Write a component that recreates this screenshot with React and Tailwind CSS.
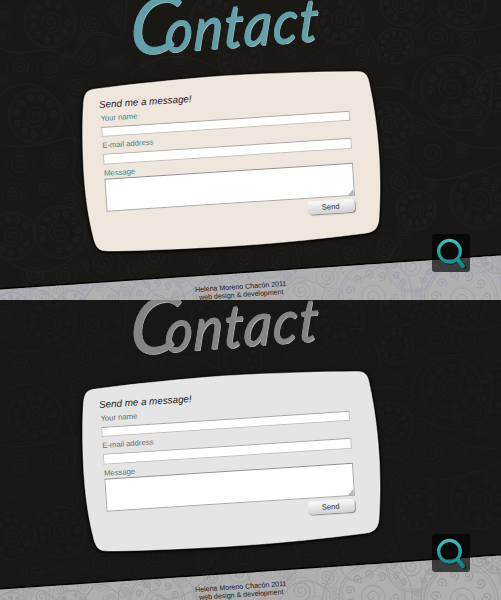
import React from "react";

const SANS = "font-['Liberation_Sans',Arial,sans-serif]";

function spiral(cx, cy, r, turns = 2.1, start = 0) {
  const steps = Math.round(turns * 12);
  let d = "";
  for (let i = 0; i <= steps; i++) {
    const t = i / steps;
    const a = start + t * turns * Math.PI * 2;
    const q = r * (0.08 + 0.92 * t);
    d += `${i ? "L" : "M"}${(cx + q * Math.cos(a)).toFixed(1)} ${(cy + q * Math.sin(a)).toFixed(1)}`;
  }
  return d;
}

// [x, y, radius] of rosettes: a spiral ringed by small curls
const DARK_ROSETTES = [
  [50, 22, 26], [35, 116, 27], [402, 4, 22], [451, 88, 30], [390, 125, 23],
  [479, 200, 29], [416, 210, 20], [462, 5, 24], [395, 46, 18], [60, 232, 26],
  [215, 18, 24], [340, 20, 24], [240, 60, 22], [12, 236, 24], [497, 90, 22],
];
const DARK_CURLS = [
  [20, 66, 13], [50, 69, 13], [88, 56, 14], [93, 24, 12], [78, 88, 13], [66, 58, 6],
  [80, 37, 7], [102, 42, 7], [114, 8, 9], [119, 21, 6], [122, 62, 8], [72, 104, 7],
  [437, 37, 15], [466, 40, 14], [432, 153, 17], [475, 112, 11], [400, 182, 15],
  [415, 33, 8], [420, 53, 7], [397, 80, 9], [487, 78, 7], [495, 58, 11], [421, 128, 10],
  [458, 120, 8], [401, 151, 9], [460, 150, 8], [432, 185, 6], [481, 131, 7],
  [36, 274, 14], [64, 276, 12], [103, 264, 17], [81, 266, 8], [137, 270, 9],
  [155, 256, 16], [245, 256, 14], [206, 262, 12], [280, 262, 14], [310, 250, 10],
  [350, 254, 14], [385, 246, 16], [405, 230, 9], [60, 160, 14], [20, 165, 14], [45, 190, 11],
  [14, 195, 12], [70, 200, 12], [110, 62, 7], [150, 64, 11], [180, 60, 9], [290, 55, 12],
  [330, 60, 9], [362, 52, 12], [335, 268, 9], [5, 15, 8], [3, 35, 7], [4, 83, 7],
];
const DARK_ARCS =
  "M0 48C25 60 45 42 63 55S80 20 108 35S120 0 130 -5M0 95C30 70 60 90 72 130S60 170 84 190M365 90Q410 78 430 115T500 148M385 0Q410 45 432 12Q450 40 501 25M381 155Q410 160 420 175T501 163M0 255Q40 290 75 255T135 285T220 250T300 268T400 240M130 75Q170 40 220 70T320 50T380 65M0 145Q30 150 60 140T85 170M412 100Q410 55 455 55T490 110Q480 150 405 112";

const LIGHT_ROSETTES = [
  [372, 43, 33], [461, 46, 37], [412, 12, 26], [157, 48, 28], [12, 56, 18], [72, 52, 16], [497, 4, 16],
];
const LIGHT_CURLS = [
  [301, 37, 14], [327, 23, 11], [205, 42, 12], [213, 24, 9], [182, 24, 9], [240, 18, 11],
  [270, 12, 12], [125, 37, 7], [111, 44, 8], [100, 29, 8], [335, 43, 9], [480, 6, 13],
  [42, 43, 11], [58, 36, 9], [26, 38, 8], [315, 52, 10], [288, 22, 8], [418, 40, 6],
  [360, 6, 8], [141, 24, 7], [228, 48, 8], [262, 48, 9], [85, 33, 7],
];
const LIGHT_ARCS =
  "M0 42Q30 25 55 45T100 20T140 20T200 30T250 26T295 18T340 12T390 2M280 46Q300 12 330 38M322 46Q330 0 372 4T412 46M421 46Q420 2 461 2T501 32M118 46Q120 14 157 16T196 46M85 46Q95 18 118 40M430 25Q450 5 450 -8";

function Swirls({ rosettes, curls, arcs }) {
  return (
    <g fill="none" strokeWidth="1">
      <path d={arcs} />
      {rosettes.map(([x, y, r], k) => (
        <g key={k}>
          <circle cx={x} cy={y} r={r} />
          <circle cx={x} cy={y} r={r * 0.92} strokeOpacity=".6" />
          <path d={spiral(x, y, r * 0.46, 2.3, k)} />
          {Array.from({ length: 10 }, (_, i) => {
            const a = (i / 11) * Math.PI * 2 + k;
            return (
              <path key={i} strokeWidth="1.2" d={spiral(x + r * 0.7 * Math.cos(a), y + r * 0.7 * Math.sin(a), r * 0.15, 1.5, a)} />
            );
          })}
        </g>
      ))}
      {curls.map(([x, y, r], k) => (
        <g key={k}>
          <path d={spiral(x, y, r * 0.72, 2.2, k)} />
          <circle cx={x} cy={y} r={r} strokeOpacity=".6" />
        </g>
      ))}
    </g>
  );
}

const THEMES = {
  color: {
    page: "bg-[#191815]",
    swirl: "stroke-[#22201c]",
    title: "text-[#62a0a9]",
    card: "#efe6de",
    label: "text-[#3f8485]",
    footer: "bg-[#b0b0b1]",
    footerSwirl: "stroke-[#a1a0ad]",
  },
  gray: {
    page: "bg-[#171717]",
    swirl: "stroke-[#1e1d1c]",
    title: "text-[#858585]",
    card: "#e5e5e5",
    label: "text-[#6c6c6c]",
    footer: "bg-[#afafaf]",
    footerSwirl: "stroke-[#9c9c9c]",
  },
};

const CARD_PATH =
  "M13 18C50 13 95 8.5 140 5C190 2 235 0.8 275 0.5C283 0.3 285.500 4 287 11C292.500 36 296 62 297.500 92C298.500 115 298 132 297 148C296 158 292 161 283 162.300C230 169 180 174 125 176.500C85 178.500 50 180 26 180C17 180 14.500 177 12 169C5 142 2 115 1 85C0.300 60 0.500 47 1.500 31C2.500 22 5 19 13 18Z";

function Field({ label, tone }) {
  return (
    <label className="flex flex-col">
      <span className={`h-[9px] pt-[0.800px] text-[7.700px] leading-[9px] ${tone}`}>{label}</span>
      <span className="mt-[4.500px] h-[10.500px] w-[249px] border border-[#c4c0bc] border-t-[#a9a6a3] bg-white" />
    </label>
  );
}

function Magnifier({ id }) {
  return (
    <button className="absolute left-[432px] top-[234px] size-[38px] rounded-[3px] bg-black/65">
      <svg viewBox="0 0 38 38" className="size-full" fill="none">
        <defs>
          <linearGradient id={id} x1="0" y1="4" x2="0" y2="34" gradientUnits="userSpaceOnUse">
            <stop offset="0" stopColor="#3cc5c4" />
            <stop offset="1" stopColor="#07858a" />
          </linearGradient>
        </defs>
        <g stroke="#000" strokeOpacity=".45" transform="translate(.8 1)">
          <circle cx="17.500" cy="17.200" r="10.800" strokeWidth="3.500" />
          <path d="M26 26L31.500 32" strokeWidth="4.800" strokeLinecap="round" />
        </g>
        <g stroke={`url(#${id})`}>
          <circle cx="17.500" cy="17.200" r="10.800" strokeWidth="3.300" />
          <path d="M26 26L30.800 32" strokeWidth="4.300" strokeLinecap="round" />
        </g>
      </svg>
    </button>
  );
}

function ContactPanel({ name }) {
  const t = THEMES[name];
  return (
    <section className={`relative isolate flex h-[300px] w-[501px] flex-col overflow-hidden ${t.page}`}>
      <svg className={`absolute inset-0 -z-10 ${t.swirl}`} width="501" height="300" viewBox="0 0 501 300" aria-hidden="true">
        <Swirls rosettes={DARK_ROSETTES} curls={DARK_CURLS} arcs={DARK_ARCS} />
      </svg>

      <header className="h-[71px] shrink-0 pl-[129px]">
        <h1
          className={`flex h-[50.500px] w-[200px] origin-bottom-left -rotate-[4.500deg] items-baseline font-['Lato',sans-serif] font-normal italic whitespace-nowrap [-webkit-text-stroke:0.900px_currentColor] [text-shadow:1px_1px_0_#b4c0c2] ${t.title}`}
        >
          <span className="inline-block w-[35px] origin-bottom -skew-x-[8deg] text-[78px] leading-[50px] tracking-[-10px]">C</span>
          <span className="origin-[50%_85%] -skew-x-[8deg] scale-y-[1.1] text-[54px] leading-[50px] tracking-[1.500px]">ontact</span>
        </h1>
      </header>

      <main className="relative isolate ml-[82px] h-[181px] w-[299px] shrink-0 pl-[17px] pt-[24px]">
        <svg
          className="absolute inset-0 -z-10 overflow-visible [filter:drop-shadow(0_0_1.500px_#000)_drop-shadow(0_1px_1px_#000)]"
          width="299"
          height="181"
          viewBox="0 0 299 181"
          aria-hidden="true"
        >
          <path d={CARD_PATH} fill={t.card} stroke="#fff" strokeOpacity=".45" strokeWidth="1" />
        </svg>
        <form className={`flex w-[249px] origin-top-left -rotate-[3.700deg] flex-col ${SANS}`}>
          <h2 className="-ml-[0.500px] h-[18px] text-[9.800px] italic leading-[19px] text-[#25211d]">Send me a message!</h2>
          <Field label="Your name" tone={t.label} />
          <div className="mt-[3.500px]">
            <Field label="E-mail address" tone={t.label} />
          </div>
          <label className="mt-[3.500px] flex flex-col">
            <span className={`h-[9px] pt-[0.800px] text-[7.700px] leading-[9px] ${t.label}`}>Message</span>
            <span className="mt-[2px] flex h-[33px] w-[249px] items-end justify-end border border-[#aaa] border-t-[#8f8f8f] bg-white">
              <svg width="6" height="6" viewBox="0 0 6 6">
                <path d="M6 0V6H0Z" fill="#b4b4b4" />
              </svg>
            </span>
          </label>
          <button
            type="button"
            className="mt-[2.500px] mr-[1.500px] h-[13px] w-[47px] self-end rounded-[4px] bg-linear-to-b from-[#fafafa] to-[#d2d2d2] text-[7.500px] leading-[13px] text-[#333] shadow-[1px_1px_1px_#888]"
          >
            Send
          </button>
        </form>
      </main>

      <footer className="relative isolate mt-[2px] h-[46px] shrink-0 bg-black [clip-path:polygon(0_34px,100%_0,100%_100%,0_100%)]">
        <div className={`absolute inset-0 -z-10 [clip-path:polygon(0_35.500px,100%_1.500px,100%_100%,0_100%)] ${t.footer}`}>
          <svg className={t.footerSwirl} width="501" height="46" viewBox="0 0 501 46" aria-hidden="true">
            <Swirls rosettes={LIGHT_ROSETTES} curls={LIGHT_CURLS} arcs={LIGHT_ARCS} />
          </svg>
        </div>
        <p className={`ml-[179.500px] w-[120px] -rotate-[3.900deg] pt-[29px] text-center text-[7.050px] leading-[8px] whitespace-nowrap text-[#1c1c1c] ${SANS}`}>
          Helena Moreno Chacón 2011
          <br />
          web design &amp; development
        </p>
      </footer>

      <Magnifier id={`lens-${name}`} />
    </section>
  );
}

export default function App() {
  return (
    <div className="h-[600px] w-[501px] overflow-hidden">
      <ContactPanel name="color" />
      <ContactPanel name="gray" />
    </div>
  );
}
